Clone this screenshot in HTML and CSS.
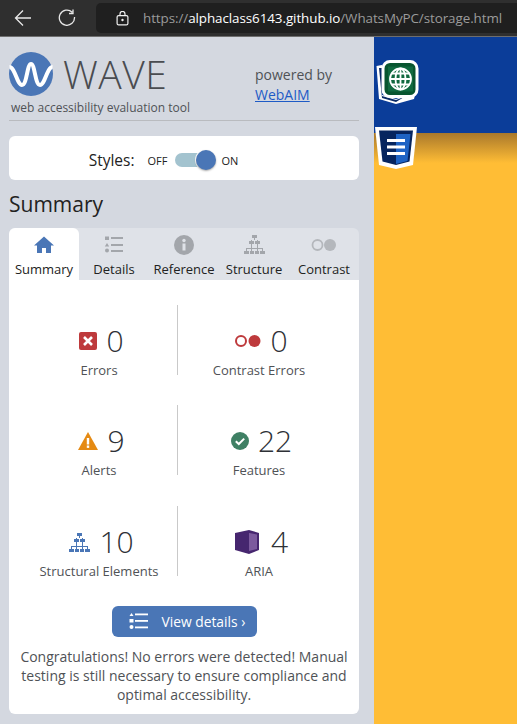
FILE: index.html
```html
<!DOCTYPE html>
<html lang="en">
<head>
<meta charset="UTF-8">
<title>WAVE</title>
<link rel="stylesheet" href="styles.css">
</head>
<body>

<div class="topbar">
  <svg class="nav-icon" width="18" height="18" viewBox="0 0 18 18"><path d="M17 9H1.500M9 1.500 1.500 9 9 16.500" fill="none" stroke="#e8e8e8" stroke-width="1.300"/></svg>
  <svg class="nav-icon" width="18" height="18" viewBox="0 0 18 18"><path d="M14.200 3.200A7.600 7.600 0 1 0 16.500 8M15 .5v4h-4" fill="none" stroke="#e8e8e8" stroke-width="1.300"/></svg>
  <div class="urlbar">
    <svg width="13" height="15" viewBox="0 0 13 15"><rect x="1.100" y="4.600" width="10.800" height="9.300" rx="1.500" fill="none" stroke="#f0f0f0" stroke-width="1.200"/><path d="M4 4.500V2.900a2.500 2.500 0 0 1 5 0v1.600" fill="none" stroke="#f0f0f0" stroke-width="1.200"/><circle cx="6.500" cy="9" r="1.200" fill="#f0f0f0"/></svg>
    <span class="url">https://<b>alphaclass6143.github.io</b>/WhatsMyPC/storage.html</span>
  </div>
</div>

<div class="main">
  <div class="sidebar">
    <div class="brand">
      <div class="brand-left">
        <div class="logo-row">
          <svg width="44" height="44" viewBox="0 0 44 44"><circle cx="22" cy="22" r="22" fill="#4a76b6"/><path d="M.5 15C6 15 8 33 13 33S18 12 22 12 26 33 31 33 38 15 43.500 15" fill="none" stroke="#fff" stroke-width="4"/></svg>
          <span class="wave">WAVE</span>
        </div>
        <div class="tagline">web accessibility evaluation tool</div>
      </div>
      <div class="powered">powered by<br><a href="#">WebAIM</a></div>
    </div>

    <div class="card styles-card">
      <span class="styles-label">Styles:</span>
      <span class="toggle-text">OFF</span>
      <span class="toggle"><span class="knob"></span></span>
      <span class="toggle-text">ON</span>
    </div>

    <h2 class="title">Summary</h2>

    <div class="tabs">
      <div class="tab active">
        <svg width="20" height="20" viewBox="0 0 20 20"><path d="M10 1.500 0 10.500h3V18h5v-5h4v5h5v-7.500h3z" fill="#4a76b6"/></svg>
        <span>Summary</span>
      </div>
      <div class="tab">
        <svg width="20" height="20" viewBox="0 0 20 20" fill="#a3a6ab"><rect x="1" y="1.500" width="4" height="3.500"/><path d="M3 8l2.200 3.500H.8z"/><circle cx="3" cy="15.500" r="2"/><rect x="7" y="2" width="12" height="2"/><rect x="7" y="9" width="12" height="2"/><rect x="7" y="15" width="12" height="2"/></svg>
        <span>Details</span>
      </div>
      <div class="tab">
        <svg width="20" height="20" viewBox="0 0 20 20"><circle cx="10" cy="10" r="10" fill="#a3a6ab"/><rect x="8.500" y="8.500" width="3" height="7" fill="#dfe2e8"/><circle cx="10" cy="5.500" r="1.700" fill="#dfe2e8"/></svg>
        <span>Reference</span>
      </div>
      <div class="tab">
        <svg width="21" height="20" viewBox="0 0 21 20" fill="#a3a6ab"><rect x="8" y="0" width="5" height="3"/><rect x="5" y="6" width="5" height="3"/><rect x="11" y="6" width="5" height="3"/><rect x="0" y="16" width="5" height="3"/><rect x="6" y="16" width="4" height="3"/><rect x="11" y="16" width="4" height="3"/><rect x="16" y="16" width="5" height="3"/><path d="M10 3h1v2h3v1h-1V5H8v1H7V5h3zM2 13h17v3h-1v-2h-4v2h-1v-2H8v2H7v-2H3v2H2zM7 9h1v4H7zM13 9h1v4h-1z"/></svg>
        <span>Structure</span>
      </div>
      <div class="tab">
        <svg width="26" height="20" viewBox="0 0 26 20"><circle cx="6.500" cy="10" r="5" fill="none" stroke="#b4b7bc" stroke-width="1.800"/><circle cx="19" cy="10" r="6" fill="#b4b7bc"/></svg>
        <span>Contrast</span>
      </div>
    </div>

    <div class="card summary">
      <div class="stats">
        <div class="stat">
          <div class="stat-top">
            <svg width="18" height="18" viewBox="0 0 18 18"><rect width="18" height="18" rx="2" fill="#be3a3c"/><path d="M5 5l8 8M13 5l-8 8" stroke="#fff" stroke-width="2.600"/></svg>
            <span class="num">0</span>
          </div>
          <div class="stat-label">Errors</div>
        </div>
        <div class="stat">
          <div class="stat-top">
            <svg width="26" height="14" viewBox="0 0 26 14"><circle cx="6" cy="7" r="5" fill="none" stroke="#be3a3c" stroke-width="2"/><circle cx="19.500" cy="7" r="6" fill="#be3a3c"/></svg>
            <span class="num">0</span>
          </div>
          <div class="stat-label">Contrast Errors</div>
        </div>
        <div class="stat">
          <div class="stat-top">
            <svg width="20" height="18" viewBox="0 0 20 18"><path d="M10 0 20 18H0z" fill="#e58a13"/><rect x="8.800" y="6" width="2.400" height="6.500" fill="#fff"/><rect x="8.800" y="13.500" width="2.400" height="2.400" fill="#fff"/></svg>
            <span class="num">9</span>
          </div>
          <div class="stat-label">Alerts</div>
        </div>
        <div class="stat">
          <div class="stat-top">
            <svg width="18" height="18" viewBox="0 0 18 18"><circle cx="9" cy="9" r="9" fill="#3f8064"/><path d="M4.800 9.200l3 2.800 5.400-5.400" fill="none" stroke="#fff" stroke-width="2"/></svg>
            <span class="num">22</span>
          </div>
          <div class="stat-label">Features</div>
        </div>
        <div class="stat">
          <div class="stat-top">
            <svg width="21" height="19" viewBox="0 0 21 19" fill="#4a76b6"><rect x="8" y="0" width="5" height="3"/><rect x="5" y="6" width="5" height="3"/><rect x="11" y="6" width="5" height="3"/><rect x="0" y="16" width="5" height="3"/><rect x="6" y="16" width="4" height="3"/><rect x="11" y="16" width="4" height="3"/><rect x="16" y="16" width="5" height="3"/><path d="M10 3h1v2h3v1h-1V5H8v1H7V5h3zM2 13h17v3h-1v-2h-4v2h-1v-2H8v2H7v-2H3v2H2zM7 9h1v4H7zM13 9h1v4h-1z"/></svg>
            <span class="num">10</span>
          </div>
          <div class="stat-label">Structural Elements</div>
        </div>
        <div class="stat">
          <div class="stat-top">
            <svg class="aria-icon" width="24" height="24" viewBox="0 0 24 24"><path d="M0 3 14 0v24L0 20z" fill="#46266f"/><path d="M14 0l10 3v17l-10 4z" fill="#46266f"/><path d="M14 3l8 1.500v14.500l-8 2z" fill="#7c5a9e"/></svg>
            <span class="num">4</span>
          </div>
          <div class="stat-label">ARIA</div>
        </div>
      </div>

      <a class="details-btn" href="#">
        <svg width="19" height="17" viewBox="0 0 19 17" fill="#fff"><path d="M2.500 0l2 3h-4z"/><rect x="0.500" y="6" width="4" height="3.500"/><circle cx="2.500" cy="14" r="2"/><rect x="6" y="0.500" width="13" height="1.800"/><rect x="6" y="7" width="13" height="1.800"/><rect x="6" y="13.500" width="13" height="1.800"/></svg>
        <span>View details ›</span>
      </a>

      <p class="note">Congratulations! No errors were detected! Manual testing is still necessary to ensure compliance and optimal accessibility.</p>
    </div>
  </div>

  <div class="page">
    <div class="page-head"></div>
    <div class="page-body"></div>

    <svg class="badge badge-globe" width="44" height="48" viewBox="0 0 44 48">
      <path d="M1.500 6 7 5v30l14 4 9-3 10-1-1 4-18 5-17-5z" fill="#fff"/>
      <path d="M4 8h3v28l14 4 8-3-8 5-14-4z" fill="#0a2a66"/>
      <rect x="8" y="1.500" width="34" height="35" rx="7" fill="#08552f" stroke="#fff" stroke-width="3"/>
      <rect x="13" y="6.500" width="25" height="25" fill="#11693f"/>
      <g fill="none" stroke="#fff" stroke-width="1.800"><circle cx="25.500" cy="19" r="10.500"/><ellipse cx="25.500" cy="19" rx="5" ry="10.500"/><path d="M25.500 8.500v21M15 19h21M16.500 13.500h18M16.500 24.500h18"/></g>
    </svg>

    <svg class="badge badge-css" width="43" height="42" viewBox="0 0 43 42">
      <path d="M0 0h42l-4 38-17 4-17-4z" fill="#fff"/>
      <path d="M4 3.500h34l-3.500 31-13.500 3.500-13.500-3.500z" fill="#06255f"/>
      <path d="M21 7h14.500l-3 27-11.500 3z" fill="#1e63c4"/>
      <g fill="#fff"><rect x="12" y="12" width="18" height="3"/><rect x="12" y="18.500" width="18" height="3"/><rect x="12" y="25" width="18" height="3"/></g>
    </svg>
  </div>
</div>

</body>
</html>
```

FILE: styles.css
```css
* {
  box-sizing: border-box;
}
html, body {
  margin: 0;
  height: 100%;
  overflow: hidden;
}
body {
  width: 517px;
  height: 724px;
  font-family: "Open Sans", sans-serif;
  color: #3f4348;
  background: #d4d8e0;
}

/* browser chrome */
.topbar {
  display: flex;
  align-items: center;
  height: 37px;
  padding-left: 14px;
  background: #2f2f2f;
  border-bottom: 1px solid #6e6e6e;
}
.nav-icon {
  flex: none;
  margin-right: 26px;
}
.urlbar {
  flex: 1;
  display: flex;
  align-items: center;
  gap: 14px;
  height: 30px;
  margin-left: -6px;
  padding-left: 20px;
  background: #1f1f1f;
  border-radius: 5px 0 0 5px;
  white-space: nowrap;
  overflow: hidden;
}
.url {
  font-size: 13.400px;
  letter-spacing: -0.07px;
  color: #9b9b9b;
}
.url b {
  font-weight: 400;
  color: #fff;
}

.main {
  display: flex;
  height: 687px;
}

/* wave panel */
.sidebar {
  flex: none;
  width: 374px;
  padding: 0 15px 0 9px;
  background: #d4d8e0;
}
.brand {
  display: flex;
  height: 84px;
  padding-top: 15px;
  border-bottom: 1px solid #b9bbbf;
}
.brand-left {
  width: 246px;
}
.logo-row {
  display: flex;
  align-items: center;
  gap: 10px;
  height: 44px;
}
.wave {
  font-size: 39px;
  font-weight: 300;
  line-height: 44px;
  letter-spacing: 0.5px;
  color: #4a4c50;
}
.tagline {
  margin: 3px 0 0 2px;
  font-size: 12px;
  line-height: 18px;
  color: #4f5256;
}
.powered {
  padding-top: 13px;
  font-size: 14px;
  line-height: 19.500px;
  color: #4f5256;
}
.powered a {
  color: #1e5bc6;
}

.card {
  background: #fff;
  border-radius: 6px;
}
.styles-card {
  display: flex;
  align-items: center;
  justify-content: center;
  height: 44px;
  margin-top: 15px;
  padding: 4px 41px 0 0;
  color: #222;
}
.styles-label {
  margin-right: 13px;
  font-size: 15.500px;
}
.toggle-text {
  font-size: 11px;
}
.toggle {
  position: relative;
  width: 35px;
  height: 14px;
  margin: 0 11px 0 8px;
  background: #a3c3cf;
  border-radius: 7px;
}
.knob {
  position: absolute;
  top: -3px;
  left: 21px;
  width: 20px;
  height: 20px;
  background: #4a76b6;
  border-radius: 50%;
  box-shadow: 0 1px 2px rgba(0, 0, 0, 0.35), 0 0 0 1px #fff;
}
.title {
  margin: 9px 0 9px;
  font-size: 21px;
  font-weight: 400;
  line-height: 30px;
  color: #222;
}

.tabs {
  display: flex;
  height: 52px;
  background: #dfe2e8;
  border-radius: 6px 6px 0 0;
}
.tab {
  flex: 1;
  display: flex;
  flex-direction: column;
  align-items: center;
  padding-top: 7px;
  font-size: 13px;
  line-height: 17px;
  color: #222;
  white-space: nowrap;
}
.tab svg {
  margin-bottom: 6px;
}
.tab.active {
  background: #fff;
  border-radius: 6px 6px 0 0;
}

.summary {
  height: 434px;
  padding: 25px 6px 0;
  border-radius: 0 0 6px 6px;
}
.stats {
  display: grid;
  grid-template-columns: 157px 1fr;
  row-gap: 30px;
  margin: 0 13px 0 6px;
}
.stat {
  height: 70px;
  text-align: center;
}
.stat:nth-child(odd) {
  border-right: 1px solid #c9c9c9;
}
.stat:nth-child(n+5) {
  margin-top: 1px;
}
.stat-top {
  display: flex;
  align-items: center;
  justify-content: center;
  gap: 9px;
  height: 40px;
  margin-top: 16px;
  padding-left: 5px;
}
.aria-icon {
  margin-right: 3px;
}
.num {
  font-size: 30px;
  font-weight: 300;
  line-height: 40px;
  color: #2e3136;
}
.stat-label {
  margin-top: 1px;
  font-size: 13px;
  line-height: 17px;
  color: #4f5256;
}
.details-btn {
  display: flex;
  align-items: center;
  width: 145px;
  height: 31px;
  margin: 30px auto 0;
  padding-left: 17px;
  gap: 14px;
  background: #4a76b6;
  border-radius: 6px;
  font-size: 13.800px;
  color: #fff;
  text-decoration: none;
}
.note {
  margin: 10px 0 0;
  padding: 0 2px;
  font-size: 14px;
  line-height: 19px;
  text-align: center;
  color: #4f5256;
}

/* page behind the panel */
.page {
  position: relative;
  flex: 1;
  background: #ffbd35;
}
.page-head {
  height: 96px;
  background: #0b3d99;
}
.page-body {
  height: 30px;
  background: linear-gradient(#a9782b, #ffbd35);
}
.badge {
  position: absolute;
  left: 1px;
}
.badge-globe {
  top: 23px;
}
.badge-css {
  top: 90px;
  left: 1px;
}
```
